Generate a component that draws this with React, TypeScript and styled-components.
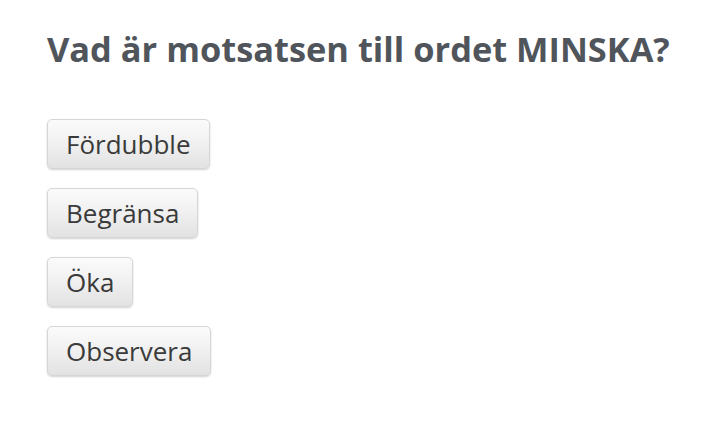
import React from "react";
import styled, { createGlobalStyle } from "styled-components";

const GlobalStyle = createGlobalStyle`
  html, body {
    margin: 0;
    padding: 0;
    background: #ffffff;
  }
  body {
    font-family: "Open Sans", "Liberation Sans", sans-serif;
  }
`;

const Page = styled.div`
  padding: 27px 40px 27px 47px;
`;

const Question = styled.h1`
  margin: 0 0 48px;
  font-size: 34.4px;
  font-weight: 700;
  line-height: 44px;
  color: #50555c;
  white-space: nowrap;
`;

const Choices = styled.div`
  display: flex;
  flex-direction: column;
  align-items: flex-start;
  gap: 19px;
`;

const Choice = styled.button`
  font-family: "Open Sans", "Liberation Sans", sans-serif;
  font-size: 26px;
  line-height: 34px;
  color: #3a3a3a;
  height: 50px;
  padding: 0 18px;
  border: 1px solid #d6d6d6;
  border-radius: 5px;
  background: linear-gradient(to bottom, #fbfbfb 0%, #f0f0f0 50%, #e2e2e2 100%);
  box-shadow: 0 1px 2px rgba(0, 0, 0, 0.18);
  cursor: pointer;
`;

const options = ["Fördubble", "Begränsa", "Öka", "Observera"];

export default function App() {
  return (
    <Page>
      <GlobalStyle />
      <Question>Vad är motsatsen till ordet MINSKA?</Question>
      <Choices>
        {options.map((o) => (
          <Choice key={o}>{o}</Choice>
        ))}
      </Choices>
    </Page>
  );
}
